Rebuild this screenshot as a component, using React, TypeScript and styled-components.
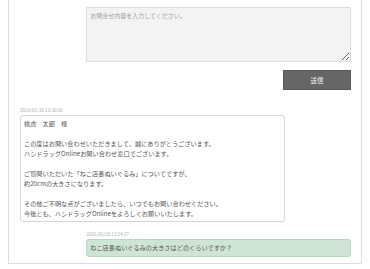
import React from 'react'
import styled, { createGlobalStyle } from 'styled-components'

const GlobalStyle = createGlobalStyle`
  html, body {
    margin: 0;
    padding: 0;
    background: #ffffff;
  }
  body {
    font-family: "Noto Sans CJK JP", "Noto Sans", sans-serif;
    color: #333333;
  }
`

const Panel = styled.div`
  box-sizing: border-box;
  width: 354px;
  margin-left: 8px;
  border: 1px solid #dcdce6;
  border-top: none;
  padding: 7px 10px 6px 11px;
`

const Form = styled.form`
  display: flex;
  flex-direction: column;
  align-items: flex-end;
`

const TextArea = styled.textarea`
  box-sizing: border-box;
  width: 80%;
  height: 55px;
  margin: 0;
  padding: 3px;
  background: #f3f3f3;
  border: 1px solid #dcdce4;
  border-radius: 1px;
  font-family: "Noto Sans CJK JP", sans-serif;
  font-size: 6px;
  line-height: 9px;
  color: #333;
  resize: vertical;
  outline: none;

  &::placeholder {
    color: #a0a0a0;
  }
`

const SendButton = styled.button`
  width: 68px;
  height: 20px;
  margin-top: 8px;
  padding: 0;
  border: 1px solid #5a5a5a;
  background: #666666;
  color: #f4f4f4;
  font-family: "Noto Sans CJK JP", sans-serif;
  font-size: 6.5px;
  cursor: pointer;
`

const Thread = styled.div`
  display: flex;
  flex-direction: column;
  margin-top: 17px;
`

const Message = styled.div<{ $mine?: boolean }>`
  display: flex;
  flex-direction: column;
  align-items: ${p => (p.$mine ? 'flex-end' : 'flex-start')};
  & + & {
    margin-top: 9px;
  }
`

const Stamp = styled.div`
  width: 80%;
  font-size: 4.6px;
  line-height: 7px;
  color: #acacac;
  margin-bottom: 1px;
`

const Bubble = styled.div<{ $mine?: boolean }>`
  box-sizing: border-box;
  width: 80%;
  padding: ${p => (p.$mine ? '3px 3px' : '3px 3px 2px')};
  background: ${p => (p.$mine ? '#cfe5d3' : '#ffffff')};
  border: 1px solid ${p => (p.$mine ? '#bcd6c2' : '#d4d4de')};
  border-radius: 3px;
  font-size: 6.2px;
  line-height: 10px;
  color: #555;
  white-space: pre-line;
`

const reply = `桃虎　太郎　様

この度はお問い合わせいただきまして、誠にありがとうございます。
ハシドラッグOnlineお問い合わせ窓口でございます。

ご質問いただいた「ねこ店長ぬいぐるみ」についてですが、
約20cmの大きさになります。

その他ご不明な点がございましたら、いつでもお問い合わせください。
今後とも、ハシドラッグOnlineをよろしくお願いいたします。`

const App = () => {
  return (
    <>
      <GlobalStyle />
      <Panel>
        <Form onSubmit={e => e.preventDefault()}>
          <TextArea placeholder="お問合せ内容を入力してください。" />
          <SendButton type="submit">送信</SendButton>
        </Form>
        <Thread>
          <Message>
            <Stamp>2026/02/26 13:30:26</Stamp>
            <Bubble>{reply}</Bubble>
          </Message>
          <Message $mine>
            <Stamp>2026/02/28 13:24:27</Stamp>
            <Bubble $mine>ねこ店長ぬいぐるみの大きさはどのくらいですか？</Bubble>
          </Message>
        </Thread>
      </Panel>
    </>
  )
}

export default App
